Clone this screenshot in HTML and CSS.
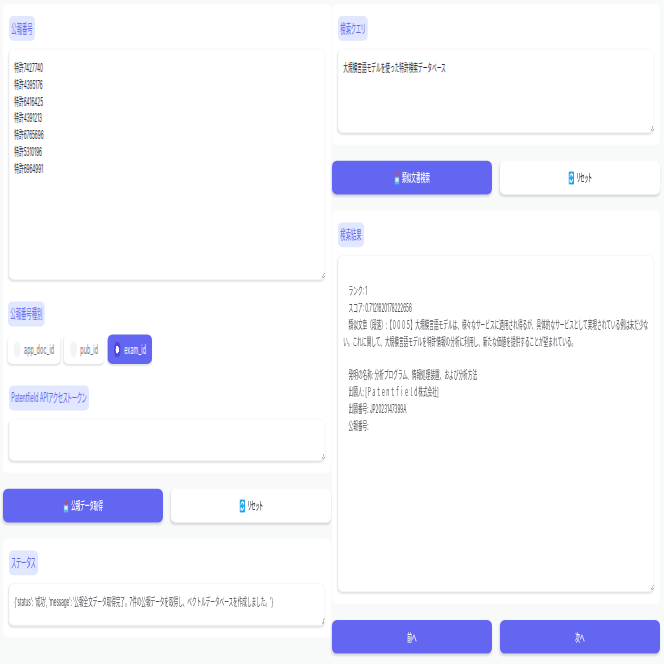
FILE: index.html
```html
<!DOCTYPE html>
<html lang="ja">

<head>
  <meta charset="UTF-8">
  <title>公報検索</title>
  <link rel="stylesheet" href="styles.css">
</head>

<body>
  <svg class="defs" width="0" height="0">
    <symbol id="tray" viewBox="0 0 16 18">
      <rect x="1" y="7" width="14" height="11" rx="2" fill="#5db4e6" />
      <rect x="3" y="9" width="10" height="5" fill="#d7eefa" />
      <path d="M6.5 0h3v4h2.5l-4 5-4-5h2.5z" fill="#e0483e" />
    </symbol>
    <symbol id="reset" viewBox="0 0 18 18">
      <rect width="18" height="18" rx="3" fill="#1fa5ec" />
      <path d="M4 8a5 5 0 0 1 9-2M14 10a5 5 0 0 1-9 2" fill="none" stroke="#fff" stroke-width="2" />
      <path d="M14.500 2v5h-5zM3.500 16v-5h5z" fill="#fff" />
    </symbol>
  </svg>

  <div class="frame">
    <div class="page">
      <!-- left column -->
      <div class="col">
        <div class="card">
          <span class="chip">公報番号</span>
          <textarea class="box box-numbers">特許7427740
特許4395176
特許6416425
特許4391213
特許6765696
特許5310196
特許6964991</textarea>

          <span class="chip chip-next chip-shift">公報番号種別</span>
          <div class="radios">
            <label class="radio"><input type="radio" name="kind"><span>app_doc_id</span></label>
            <label class="radio"><input type="radio" name="kind"><span>pub_id</span></label>
            <label class="radio selected"><input type="radio" name="kind" checked><span>exam_id</span></label>
          </div>

          <span class="chip chip-next">Patentfield APIアクセストークン</span>
          <textarea class="box box-small"></textarea>
        </div>

        <div class="btn-row">
          <button class="btn primary"><svg class="ico"><use href="#tray" /></svg>公報データ取得</button>
          <button class="btn"><svg class="ico"><use href="#reset" /></svg>リセット</button>
        </div>

        <div class="card">
          <span class="chip">ステータス</span>
          <textarea class="box box-small muted box-status" disabled>{'status': '成功', 'message': '公報全文データ取得完了。7件の公報データを取得し、ベクトルデータベースを作成しました。'}</textarea>
        </div>
      </div>

      <!-- right column -->
      <div class="col">
        <div class="card">
          <span class="chip">検索クエリ</span>
          <textarea class="box box-query">大規模言語モデルを使った特許検索データベース</textarea>
        </div>

        <div class="btn-row">
          <button class="btn primary"><svg class="ico"><use href="#tray" /></svg>類似文書検索</button>
          <button class="btn"><svg class="ico"><use href="#reset" /></svg>リセット</button>
        </div>

        <div class="card">
          <span class="chip">検索結果</span>
          <textarea class="box box-result muted" disabled>

    ランク: 1
    スコア: 0.7121620178222656
    類似文章（段落）:【０００５】大規模言語モデルは、様々なサービスに適用され得るが、具体的なサービスとして実現されている例は未だ少ない。これに関して、大規模言語モデルを特許情報の分析に利用し、新たな価値を提供することが望まれている。

    発明の名称: 分析プログラム、情報処理装置、および分析方法
    出願人: [Ｐａｔｅｎｔｆｉｅｌｄ株式会社]
    出願番号: JP2023147399A
    公報番号: </textarea>
        </div>

        <div class="btn-row">
          <button class="btn primary">前へ</button>
          <button class="btn primary">次へ</button>
        </div>
      </div>
    </div>
  </div>
</body>

</html>
```

FILE: styles.css
```css
html,
body {
  margin: 0;
  height: 664px;
  overflow: hidden;
  background: #f8fafa;
}

.defs {
  display: block;
  height: 0;
}

.frame {
  width: 664px;
  height: 664px;
  overflow: hidden;
}

/* the shot is squeezed: laid out at 1992x830, then scaled down */
.page {
  display: flex;
  align-items: flex-start;
  gap: 3px;
  width: 1992px;
  height: 830px;
  padding: 5px 12px 0 9px;
  box-sizing: border-box;
  transform: scale(0.33333, 0.8);
  transform-origin: 0 0;
  font-family: Inter, "Noto Sans CJK JP", sans-serif;
  font-size: 14px;
}

.col {
  display: flex;
  flex-direction: column;
  gap: 20px;
  width: 984px;
  flex: none;
}

.card {
  display: flex;
  flex-direction: column;
  align-items: flex-start;
  padding: 15px 18px;
  background: white;
  border-radius: 16px / 7px;
}

.chip {
  height: 31px;
  line-height: 31px;
  padding: 0 7px;
  font-size: 16px;
  font-feature-settings: "palt";
  color: #6366f1;
  background: #e0e7ff;
  border-radius: 12px / 6px;
}

.chip-next {
  margin-top: 27px;
}

.chip-shift {
  margin-left: -3px;
}

.box {
  display: block;
  width: 100%;
  box-sizing: border-box;
  margin-top: 10px;
  padding: 12px 15px;
  font-family: inherit;
  font-size: 14px;
  line-height: 21px;
  color: #27272a;
  background: white;
  border: 1px solid #f4f4f5;
  border-radius: 16px / 7px;
  box-shadow: 0 2px 3px rgba(0, 0, 0, 0.1);
  outline: none;
}

.muted {
  color: #55555c;
}

.box-status {
  letter-spacing: -0.2px;
}

.box-numbers {
  height: 289px;
}

.box-small {
  height: 53px;
}

.box-query {
  height: 105px;
}

.box-result {
  height: 421px;
}

.radios {
  display: flex;
  gap: 11px;
  margin-top: 10px;
  margin-left: -4px;
}

.radio {
  display: flex;
  align-items: center;
  gap: 10px;
  height: 37px;
  padding: 0 18px;
  color: #71717a;
  font-size: 16px;
  letter-spacing: 0.5px;
  background: white;
  border-radius: 14px / 7px;
  box-shadow: 0 2px 3px rgba(0, 0, 0, 0.1);
}

.radio input {
  appearance: none;
  width: 21px;
  height: 20px;
  margin: 0;
  background: #f3f4f6;
  border-radius: 50%;
}

.selected {
  color: white;
  background: #6366f1;
}

.selected input {
  background: #4f46e5 radial-gradient(circle, white 0, white 32%, transparent 36%);
}

.btn-row {
  display: flex;
  gap: 24px;
}

.btn {
  display: flex;
  align-items: center;
  justify-content: center;
  gap: 6px;
  flex: 1;
  height: 42px;
  padding: 0;
  font-family: inherit;
  font-size: 14px;
  font-weight: 500;
  font-feature-settings: "palt";
  color: #3f3f46;
  background: white;
  border: none;
  border-radius: 14px / 7px;
  box-shadow: 0 2px 4px rgba(0, 0, 0, 0.12);
}

.primary {
  color: white;
  background: #6366f1;
}

.ico {
  width: 18px;
  height: 17px;
}
```
